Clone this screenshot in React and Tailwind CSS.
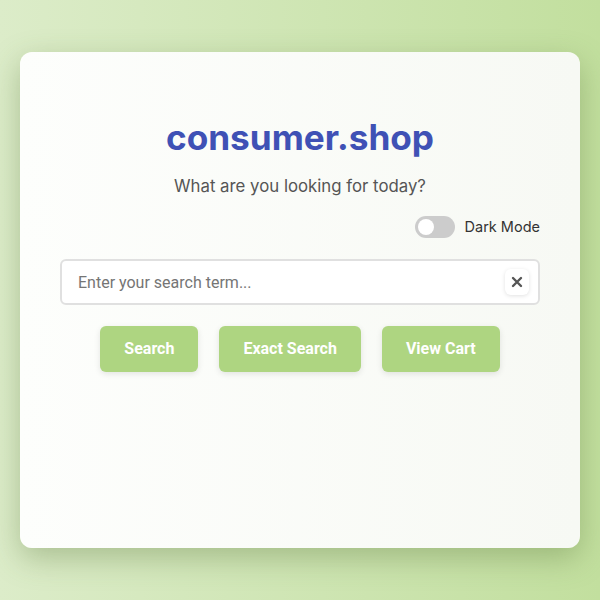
import React, { useState } from "react";

export default function App() {
  const [q, setQ] = useState("");
  return (
    <div
      className="w-full min-h-[600px] flex items-center justify-center bg-gradient-to-r from-[#dcecc9] to-[#c2df9e]"
      style={{ fontFamily: "Inter, 'Noto Sans', sans-serif" }}
    >
      <div className="w-[560px] h-[496px] rounded-xl bg-gradient-to-r from-[#fdfefc] to-[#f7f9f4] shadow-[0_10px_30px_rgba(80,110,50,0.35)] px-10 pt-[63px] flex flex-col">
        <h1 className="text-center text-[35.2px] leading-[44px] font-bold text-[#3f51b5]">
          consumer.shop
        </h1>
        <p className="text-center text-[16.8px] leading-6 text-[#555] mt-[15px]">
          What are you looking for today?
        </p>
        <div className="flex items-center justify-end gap-[10px] mt-[18px]">
          <div className="w-10 h-[22px] rounded-full bg-[#cccccc] p-[3px] flex items-center">
            <div className="w-4 h-4 rounded-full bg-white" />
          </div>
          <span className="text-[14.5px] text-[#333]">Dark Mode</span>
        </div>
        <div className="relative mt-[21px]">
          <input
            value={q}
            onChange={(e) => setQ(e.target.value)}
            placeholder="Enter your search term..."
            className="w-full h-[46px] rounded-md border-2 border-[#e0e0e0] bg-white pl-4 pr-12 text-[16px] text-[#333] placeholder:text-[#757575] outline-none"
            style={{ fontFamily: "Roboto, sans-serif" }}
          />
          <button className="absolute right-[11px] top-[10px] w-[24px] h-[26px] rounded-md bg-white shadow-[0_1px_4px_rgba(0,0,0,0.12)] flex items-center justify-center text-[#444]">
            <svg width="12" height="12" viewBox="0 0 12 12">
              <path d="M2 2L10 10M10 2L2 10" stroke="#555" strokeWidth="2.4" strokeLinecap="round" />
            </svg>
          </button>
        </div>
        <div
          className="flex justify-center gap-[21px] mt-[21px]"
          style={{ fontFamily: "Roboto, sans-serif" }}
        >
          {["Search", "Exact Search", "View Cart"].map((t) => (
            <button
              key={t}
              className="h-[46px] px-6 rounded-md bg-[#aed581] text-white font-bold text-[16px] shadow-[0_2px_6px_rgba(0,0,0,0.1)]"
            >
              {t}
            </button>
          ))}
        </div>
      </div>
    </div>
  );
}
